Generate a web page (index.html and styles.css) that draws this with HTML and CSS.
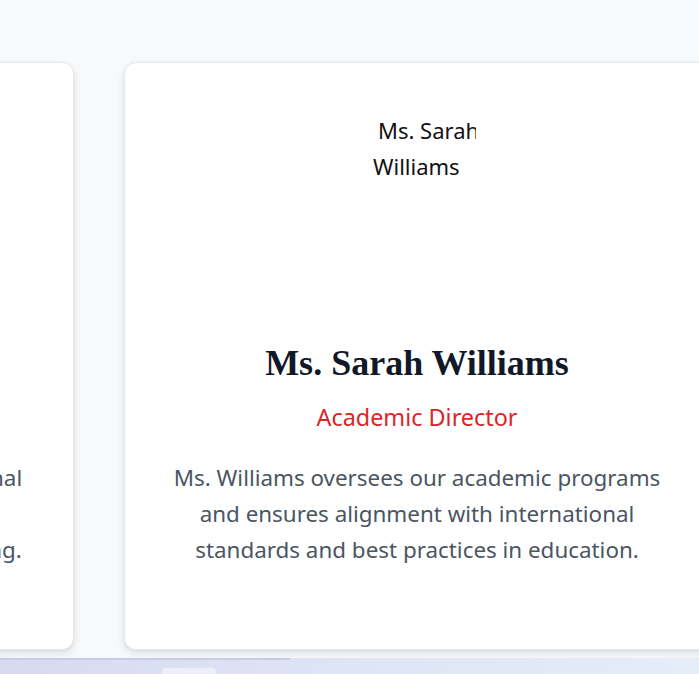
FILE: index.html
```html
<!DOCTYPE html>
<html lang="en">
<head>
<meta charset="utf-8">
<title>Leadership</title>
<link rel="stylesheet" href="styles.css">
</head>
<body>
<main class="stage">
  <div class="track">
    <article class="card">
      <div class="avatar"><span class="alt-l1">Dr. James</span><span class="alt-l2">Johnson</span></div>
      <h3 class="name">Dr. James Johnson</h3>
      <p class="role">Principal</p>
      <p class="desc desc-offset"><span class="ln">Dr. Johnson has two decades of international</span><span class="ln">leadership experience in schools</span><span class="ln">and is devoted to student-centered learning.</span></p>
    </article>
    <article class="card">
      <div class="avatar"><span class="alt-l1">Ms. Sarah</span><span class="alt-l2">Williams</span></div>
      <h3 class="name">Ms. Sarah Williams</h3>
      <p class="role">Academic Director</p>
      <p class="desc"><span class="ln">Ms. Williams oversees our academic programs</span><span class="ln">and ensures alignment with international</span><span class="ln">standards and best practices in education.</span></p>
    </article>
  </div>
</main>
<footer class="dock">
  <div class="dock-line"></div>
  <div class="dock-tab"></div>
</footer>
</body>
</html>
```
FILE: styles.css
```css
html, body {
  margin: 0;
  padding: 0;
}
body {
  width: 699px;
  height: 674px;
  overflow: hidden;
  background: #f8f9fb;
  font-family: "Noto Sans", "Open Sans", sans-serif;
  display: flex;
  flex-direction: column;
}
.stage {
  height: 658px;
  padding-top: 62px;
  box-sizing: border-box;
  overflow: hidden;
}
.track {
  display: flex;
  gap: 50px;
  margin-left: -512px;
}
.card {
  flex: 0 0 586px;
  height: 588px;
  box-sizing: border-box;
  background: #fff;
  border: 1px solid #e7e9ee;
  border-radius: 12px;
  box-shadow: 0 4px 8px rgba(0,0,0,0.09), 0 1px 3px rgba(0,0,0,0.06);
  padding: 49px 10px 0;
  text-align: center;
}
.avatar {
  width: 128px;
  height: 128px;
  margin: 0 auto;
  overflow: hidden;
  clip-path: inset(0 5px 0 0);
  font-size: 22px;
  line-height: 36px;
  color: #111;
  text-align: left;
  display: flex;
  flex-direction: column;
}
.alt-l1 { padding-left: 25px; white-space: nowrap; }
.alt-l2 { padding-left: 20px; white-space: nowrap; }
.name {
  margin: 103px 0 0;
  font-family: "Liberation Serif", "Times New Roman", serif;
  font-weight: bold;
  font-size: 36px;
  line-height: 40px;
  color: #111827;
}
.role {
  margin: 19px 0 0;
  font-size: 23.4px;
  line-height: 30px;
  color: #dc2626;
}
.desc {
  margin: 28px 0 0;
  font-size: 22.4px;
  line-height: 36px;
  color: #4b5563;
}
.desc-offset {
  padding-left: 14px;
}
.ln { display: block; white-space: nowrap; }
.dock {
  position: relative;
  height: 16px;
  background: linear-gradient(90deg, #d6daf0 0%, #dde3f4 40%, #e4edf8 100%);
}
.dock-line {
  width: 290px;
  height: 2px;
  background: #c6cce6;
}
.dock-tab {
  position: absolute;
  left: 161px;
  top: 9px;
  width: 54px;
  height: 12px;
  background: #eceef9;
  border: 1px solid #dfe2f2;
  border-radius: 5px;
}
```
